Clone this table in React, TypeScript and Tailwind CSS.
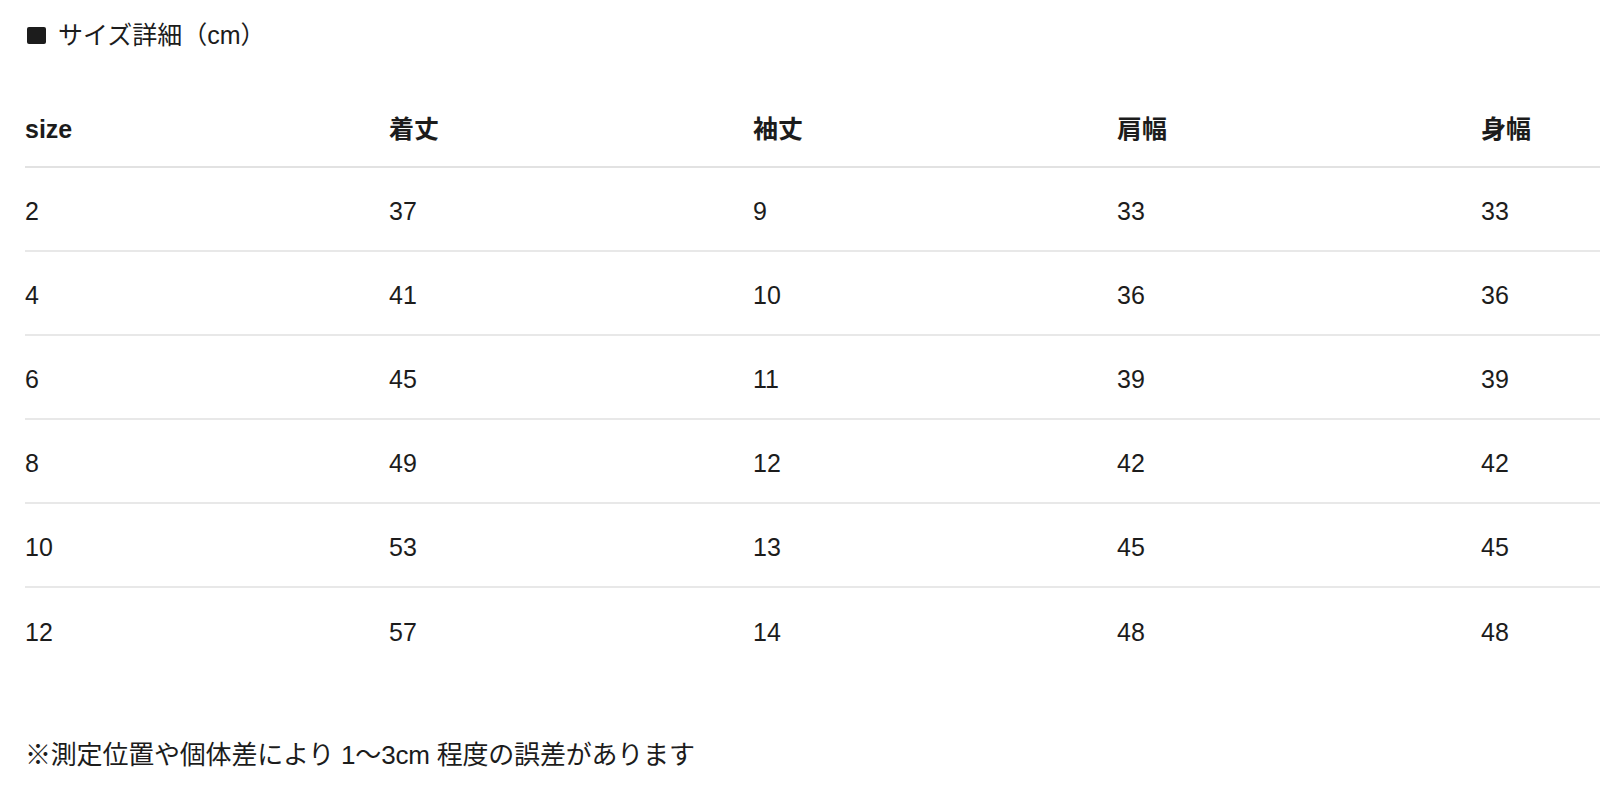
const headers = ["size", "着丈", "袖丈", "肩幅", "身幅"];

const rows: string[][] = [
  ["2", "37", "9", "33", "33"],
  ["4", "41", "10", "36", "36"],
  ["6", "45", "11", "39", "39"],
  ["8", "49", "12", "42", "42"],
  ["10", "53", "13", "45", "45"],
  ["12", "57", "14", "48", "48"],
];

const App = () => {
  return (
    <div className="min-h-screen w-full overflow-hidden bg-white pl-[25px] text-[25px] text-[#1c1c1c] font-['Liberation_Sans','Noto_Sans_CJK_JP',sans-serif]">
      <div className="flex h-[70px] items-center">
        <span className="mr-[12px] ml-[2px] inline-block h-[17px] w-[19px] rounded-[2px] bg-[#1c1c1c]" />
        <span className="leading-none">サイズ詳細（cm）</span>
      </div>

      <div className="mt-[21px] w-[1820px]">
        <div className="grid h-[77px] grid-cols-[repeat(5,364px)] items-center border-b-2 border-[#e2e2e2] pt-[2px] font-bold">
          {headers.map((h) => (
            <div key={h}>{h}</div>
          ))}
        </div>
        {rows.map((row, i) => (
          <div
            key={row[0]}
            className={
              i < rows.length - 1
                ? "grid h-[84px] grid-cols-[repeat(5,364px)] items-center border-b-2 border-[#e8e8e8] pt-[6px]"
                : "grid h-[84px] grid-cols-[repeat(5,364px)] items-center pt-[6px]"
            }
          >
            {row.map((cell, j) => (
              <div key={j}>{cell}</div>
            ))}
          </div>
        ))}
      </div>

      <div className="mt-[63px] flex h-[40px] items-center">
        <p className="text-[26px] tracking-[-0.2px]">※測定位置や個体差により 1〜3cm 程度の誤差があります</p>
      </div>
    </div>
  );
};

export default App;
